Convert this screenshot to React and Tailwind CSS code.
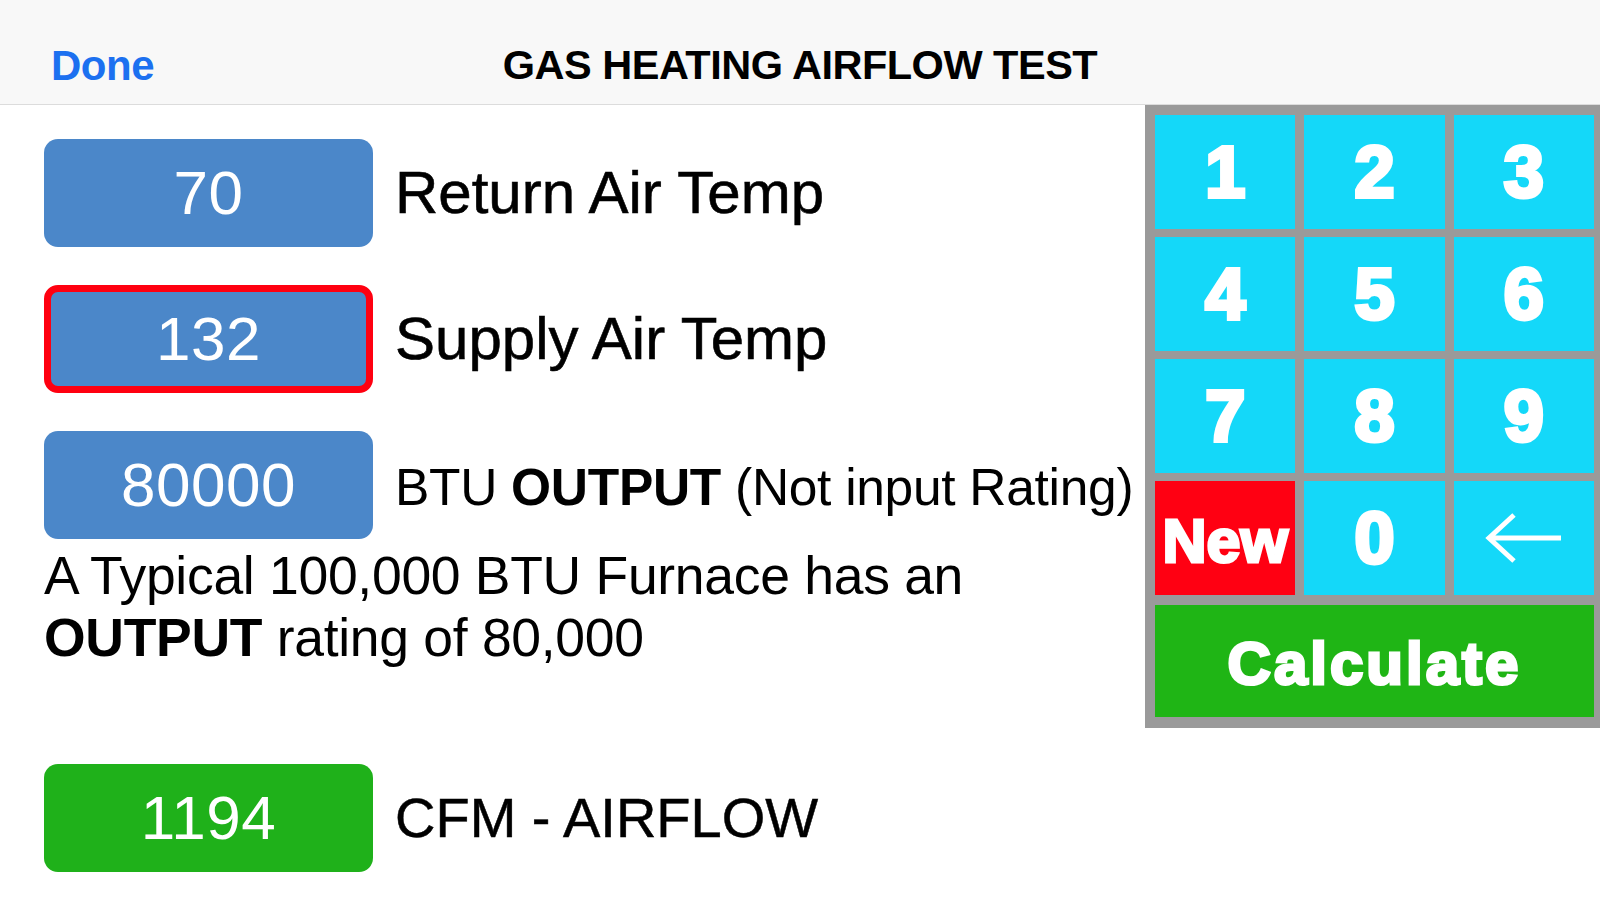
import React from "react";

const keys = ["1", "2", "3", "4", "5", "6", "7", "8", "9"];

function ValueBox({ value, color = "bg-[#4b87c9]", selected = false }) {
  return (
    <div
      className={`flex h-[108px] w-[329px] shrink-0 items-center justify-center rounded-[14px] ${color} ${
        selected ? "border-[7px] border-[#ff0010]" : ""
      }`}
    >
      <span className="text-[62px] leading-none tracking-[0.5px] text-white">{value}</span>
    </div>
  );
}

function BackArrow() {
  return (
    <svg width="78" height="52" viewBox="0 0 78 52" fill="none">
      <path d="M76 26H5M29 3L4 26l25 23" stroke="white" strokeWidth="5" strokeLinecap="butt" strokeLinejoin="miter" />
    </svg>
  );
}

export default function App() {
  return (
    <div className="h-[900px] w-[1600px] overflow-hidden bg-white font-['Liberation_Sans',Arial,sans-serif] text-black">
      <header className="grid h-[105px] grid-cols-[1fr_auto_1fr] items-center border-b border-[#dcdcdc] bg-[#f8f8f8] pt-[26px]">
        <div className="pl-[51px] text-[42px] font-bold tracking-[-0.5px] text-[#1c70f0]">Done</div>
        <div className="text-[41.5px] font-bold tracking-[-0.5px]">GAS HEATING AIRFLOW TEST</div>
        <div />
      </header>

      <div className="flex items-start">
        <main className="flex-1 pl-[44px] pt-[34px]">
          <div className="flex items-center gap-[22px]">
            <ValueBox value="70" />
            <span className="text-[60px] leading-none [-webkit-text-stroke:0.6px_black]">Return Air Temp</span>
          </div>
          <div className="mt-[38px] flex items-center gap-[22px]">
            <ValueBox value="132" selected />
            <span className="text-[60px] leading-none [-webkit-text-stroke:0.6px_black]">Supply Air Temp</span>
          </div>
          <div className="mt-[38px] flex items-center gap-[22px]">
            <ValueBox value="80000" />
            <span className="whitespace-nowrap pt-[6px] text-[51.5px] leading-none tracking-[-0.3px]">
              BTU <b>OUTPUT</b> (Not input Rating)
            </span>
          </div>
          <p className="mt-[6px] text-[53.5px] leading-[62px] tracking-[-0.3px]">
            A Typical 100,000 BTU Furnace has an
            <br />
            <b>OUTPUT</b> rating of 80,000
          </p>
          <div className="mt-[95px] flex items-center gap-[22px]">
            <ValueBox value="1194" color="bg-[#1fb11a]" />
            <span className="text-[56px] leading-none [-webkit-text-stroke:0.5px_black]">CFM - AIRFLOW</span>
          </div>
        </main>

        <aside className="w-[455px] shrink-0 bg-[#9a9a9a] pb-[11px] pl-[10px] pr-[6px] pt-[10px]">
          <div className="grid grid-cols-3 gap-x-[9px] gap-y-[8px]">
            {keys.map((k) => (
              <button
                key={k}
                className="flex h-[114px] items-center justify-center bg-[#14d8f9] text-[72px] font-bold leading-none text-white [-webkit-text-stroke:4px_white]"
              >
                {k}
              </button>
            ))}
            <button className="flex h-[114px] items-center justify-center bg-[#ff0012] pt-[6px] text-[61px] font-bold leading-none text-white [-webkit-text-stroke:3px_white]">
              New
            </button>
            <button className="flex h-[114px] items-center justify-center bg-[#14d8f9] text-[72px] font-bold leading-none text-white [-webkit-text-stroke:4px_white]">
              0
            </button>
            <button className="flex h-[114px] items-center justify-center bg-[#14d8f9]">
              <BackArrow />
            </button>
            <button className="col-span-3 mt-[2px] flex h-[112px] items-center justify-center bg-[#1fb515] pt-[6px] text-[60px] font-bold leading-none tracking-[3px] text-white [-webkit-text-stroke:3px_white]">
              Calculate
            </button>
          </div>
        </aside>
      </div>
    </div>
  );
}
